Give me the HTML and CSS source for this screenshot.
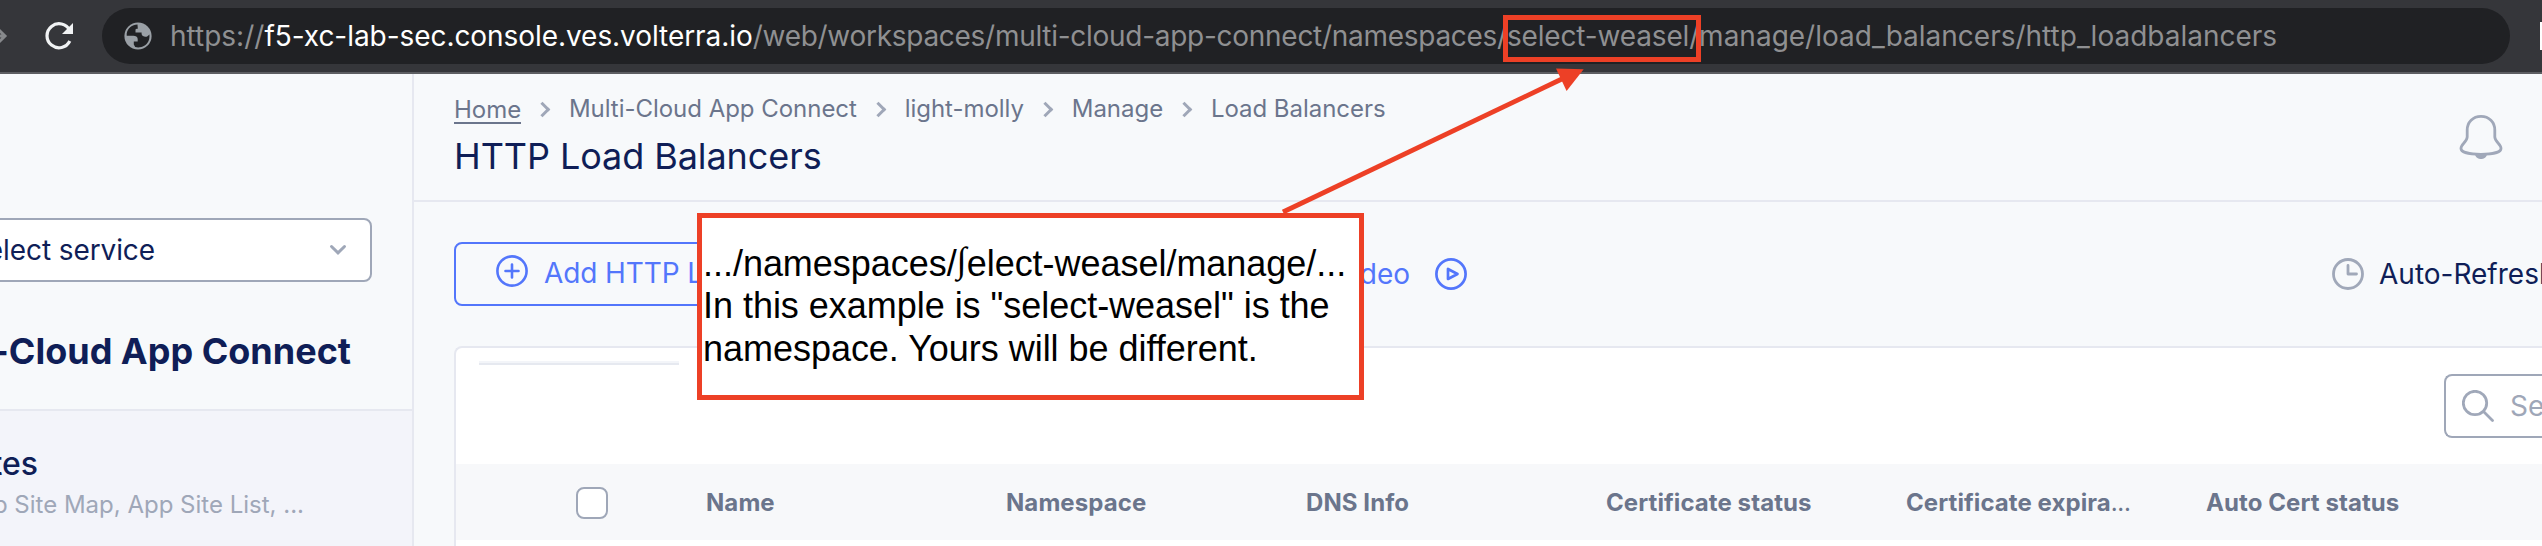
FILE: index.html
```html
<!DOCTYPE html>
<html lang="en">
<head>
<meta charset="utf-8">
<title>HTTP Load Balancers</title>
<link rel="stylesheet" href="styles.css">
</head>
<body>
<div class="browser-bar">
  <svg class="forward" width="8" height="24" viewBox="0 0 8 24"><path d="M-4 12H5M-3 4L5 12L-3 20" fill="none" stroke="#87898c" stroke-width="3"/></svg>
  <svg class="reload" width="32" height="32" viewBox="0 0 32 32"><path d="M26.300 10.500A12 12 0 1 0 26.300 21" transform="translate(-.5 0)" fill="none" stroke="#f1f3f4" stroke-width="3.200"/><path d="M29 3V14H18Z" fill="#f1f3f4"/></svg>
  <div class="address">
    <svg class="globe" width="28" height="28" viewBox="0 0 28 28"><circle cx="14" cy="14" r="13.600" fill="#9aa0a6"/><path d="M13.500 2.600C8 2.800 3.800 6.300 2.700 11.500L2.700 13.800H9.500C11.500 13.800 13.700 14.800 13.700 17V19.500H9.800V22.500L11.200 25.100C17 26.500 22 23.700 24.300 19.500C25.500 17 25.600 15 25.400 12.500L23.500 14.200C21.500 15.500 18 14.500 17.600 12V10.500H11.500V8C11.500 7 12.300 6.800 13.800 6.800Z" fill="#202124"/></svg>
    <div class="url"><span class="scheme">https://</span><span class="host">f5-xc-lab-sec.console.ves.volterra.io</span><span class="path">/web/workspaces/multi-cloud-app-connect/namespaces/</span><span class="namespace">select-weasel/</span><span>manage/load_balancers/http_loadbalancers</span></div>
  </div>
  <div class="bar-edge"></div>
</div>
<div class="app">
  <aside class="sidebar">
    <div class="side-top">
      <div class="service"><span>Select service</span><svg width="18" height="12" viewBox="0 0 18 12"><path d="M2.500 2.500L9 8.800L15.500 2.500" fill="none" stroke="#9fa7b8" stroke-width="3" stroke-linecap="round"/></svg></div>
      <div class="workspace"><span>Multi-Cloud App Connect</span></div>
    </div>
    <div class="side-item"><div class="side-title"><span>Sites</span></div><div class="side-sub"><span>App Site Map, App Site List, ...</span></div></div>
  </aside>
  <main class="main">
    <header class="header">
      <div>
        <nav class="crumbs"><a>Home</a><i></i><span>Multi-Cloud App Connect</span><i></i><span>light-molly</span><i></i><span>Manage</span><i></i><span>Load Balancers</span></nav>
        <h1><span>HTTP Load Balancers</span></h1>
      </div>
      <svg class="bell" width="44" height="46" viewBox="0 0 44 46"><path d="M8.200 16C8.200 8 14 2.300 22 2.300S35.800 8 35.800 16V23C36 28 42 30 42 34.500C42 38 34 40.300 22 40.300S2 38 2 34.500C2 30 8 28 8.200 23Z" fill="none" stroke="#a0a8b9" stroke-width="2.800"/><path d="M16 40.500H28C27 44 24.500 45 22 45S17 44 16 40.500Z" fill="#a0a8b9"/></svg>
    </header>
    <div class="toolbar">
      <div class="add"><svg width="32" height="32" viewBox="0 0 32 32"><g fill="none" stroke="#5376fb" stroke-width="2.600" stroke-linecap="round"><circle cx="16" cy="16" r="14.600"/><path d="M9.500 16H22.500M16 9.500V22.500"/></g></svg><span>Add HTTP L</span></div>
      <div class="video"><span>deo</span><svg width="32" height="32" viewBox="0 0 32 32"><g fill="none" stroke="#5376fb" stroke-width="2.700" stroke-linejoin="round"><circle cx="16" cy="16" r="14.600"/><path d="M13 11V21L22.500 16Z"/></g></svg></div>
      <div class="refresh"><svg width="32" height="32" viewBox="0 0 32 32"><g fill="none" stroke="#a0a8b9" stroke-width="2.800" stroke-linecap="round"><circle cx="16" cy="16" r="14.500"/><path d="M16 7.500V16H24.500" stroke-linejoin="round"/></g></svg><span>Auto-Refresh</span></div>
    </div>
    <section class="card">
      <div class="card-top">
        <div class="tab-line"></div>
        <div class="search"><svg width="32" height="32" viewBox="0 0 32 32"><g fill="none" stroke="#a0a8b9" stroke-width="2.800" stroke-linecap="round"><circle cx="13" cy="13" r="11.700"/><path d="M22 22L30.500 30.500"/></g></svg><span>Search</span></div>
      </div>
      <div class="thead"><div class="check"></div><b>Name</b><b>Namespace</b><b>DNS Info</b><b>Certificate status</b><b>Certificate expira<em>...</em></b><b>Auto Cert status</b></div>
    </section>
  </main>
</div>
<div class="mark"></div>
<svg class="arrow" width="304" height="150" viewBox="1282 66 304 150"><path d="M1283 212L1566 77" stroke="#ed4026" stroke-width="4.800"/><path d="M1556 68.500L1583.700 69.200L1566.600 91Z" fill="#ed4026"/></svg>
<div class="callout"><p>.../namespaces/<i class="integral">∫</i>elect-weasel/manage/...</p><p>In this example is "select-weasel" is the</p><p>namespace. Yours will be different.</p></div>
</body>
</html>
```
FILE: styles.css
```css
* { box-sizing: border-box; }
body { margin: 0; width: 2542px; height: 546px; overflow: hidden; position: relative; font-family: Inter, "Liberation Sans", sans-serif; background: #f7f9fb; }
svg { display: block; flex: none; }
.browser-bar { height: 74px; background: #35363a; border-bottom: 2px solid #5d5e62; display: flex; align-items: center; }
.forward { margin-right: 36px; }
.reload { margin-right: 26px; }
.address { width: 2408px; height: 56px; border-radius: 28px; background: #202124; display: flex; align-items: center; padding-left: 22px; white-space: nowrap; }
.globe { margin-right: 18px; }
.url { font-size: 28px; line-height: 56px; color: #8f9092; white-space: nowrap; }
.host { color: #fff; letter-spacing: -.06px; }
.path { letter-spacing: -.28px; }
.namespace { letter-spacing: -.16px; }
.bar-edge { width: 2px; height: 28px; margin-left: 30px; background: #fff; }
.app { display: flex; height: 472px; }
.sidebar { width: 414px; flex: none; border-right: 2px solid #e6e8f0; overflow: hidden; display: flex; flex-direction: column; }
.side-top { height: 337px; border-bottom: 2px solid #e6e8f0; padding-top: 144px; }
.service { width: 400px; margin-left: -28px; height: 64px; border: 2px solid #9fa7b8; border-radius: 8px; background: #fff; display: flex; justify-content: space-between; align-items: center; padding: 0 23px 0 0; font-size: 28px; color: #0f1e57; }
.service span { margin-left: -5px; letter-spacing: -.1px; }
.workspace { display: flex; justify-content: flex-end; width: 351px; white-space: nowrap; font-size: 36px; font-weight: 700; line-height: 44px; color: #0f1e57; margin-top: 47px; }
.side-item { flex: 1; background: #f3f4fa; padding-top: 33px; white-space: nowrap; }
.side-title { width: 38px; display: flex; justify-content: flex-end; font-size: 32px; font-weight: 500; line-height: 40px; color: #0f1e57; }
.side-sub { width: 304px; display: flex; justify-content: flex-end; font-size: 24px; line-height: 30px; color: #9fa7b8; margin-top: 6px; }
.main { flex: 1; min-width: 0; }
.header { height: 128px; border-bottom: 2px solid #e6e8f0; padding: 20px 39px 0 40px; display: flex; justify-content: space-between; }
.crumbs { display: flex; align-items: center; font-size: 24px; line-height: 30px; color: #6b758c; white-space: nowrap; letter-spacing: -.03px; }
.crumbs a { border-bottom: 2px solid #6b758c; height: 29px; }
.crumbs i { width: 11px; height: 11px; border: solid #9fa7b8; border-width: 3px 3px 0 0; transform: rotate(45deg); margin: 0 20.500px 0 16.300px; }
h1 { margin: 10px 0 0; font-size: 36px; line-height: 44px; font-weight: 400; color: #0f1e57; letter-spacing: -.08px; }
.bell { margin-top: 20px; }
.toolbar { height: 144px; display: flex; padding: 40px 0 0 40px; font-size: 28px; line-height: 34px; white-space: nowrap; color: #5376fb; }
.toolbar > div { flex: none; }
.add { width: 420px; height: 64px; border: 2px solid #5376fb; border-radius: 8px; display: flex; padding: 11px 0 0 40px; gap: 16px; }
.add span { padding-top: 1px; letter-spacing: -.1px; }
.video { width: 593px; height: 64px; display: flex; justify-content: flex-end; align-items: center; gap: 25px; }
.refresh { height: 64px; display: flex; align-items: center; gap: 15px; color: #0f1e57; margin-left: 865px; }
.card { margin-left: 40px; height: 200px; border: 2px solid #e6e8f0; border-right: 0; border-bottom: 0; border-top-left-radius: 8px; background: #fff; overflow: hidden; }
.card-top { height: 116px; display: flex; justify-content: space-between; padding: 13px 0 0 23px; }
.tab-line { width: 200px; height: 4px; background: #e6e9f0; border-top: 2px solid #f3f5f9; }
.search { width: 98px; height: 64px; margin-top: 13px; border: 2px solid #9fa7b8; border-right: 0; border-radius: 8px 0 0 8px; padding-left: 16px; display: flex; align-items: center; gap: 16px; font-size: 28px; color: #9fa7b8; overflow: hidden; }
.thead { height: 76px; background: #f7f8fa; display: flex; align-items: center; font-size: 24px; color: #6b758c; white-space: nowrap; }
.thead b { width: 300px; flex: none; letter-spacing: .08px; }
.thead em { font-style: normal; font-weight: 400; letter-spacing: -.4px; }
.check { width: 32px; height: 32px; flex: none; border: 2px solid #9fa7b8; border-radius: 8px; background: #fff; margin: 2px 98px 0 120px; }
.mark { position: absolute; left: 1503px; top: 15px; width: 198px; height: 47px; border: 5px solid #ed4026; }
.arrow { position: absolute; left: 1282px; top: 66px; }
.callout { position: absolute; left: 697px; top: 213px; width: 667px; height: 187px; border: 5px solid #ed4026; background: #fff; padding: 25px 0 0 1px; font: 36px/42.300px "Liberation Sans", Arial, sans-serif; letter-spacing: -.03px; color: #000; white-space: nowrap; }
.callout p { margin: 0; height: 42.300px; }
.integral { display: inline-block; width: 10px; font: normal 36px/20px "Liberation Serif", serif; vertical-align: 4px; }
```
